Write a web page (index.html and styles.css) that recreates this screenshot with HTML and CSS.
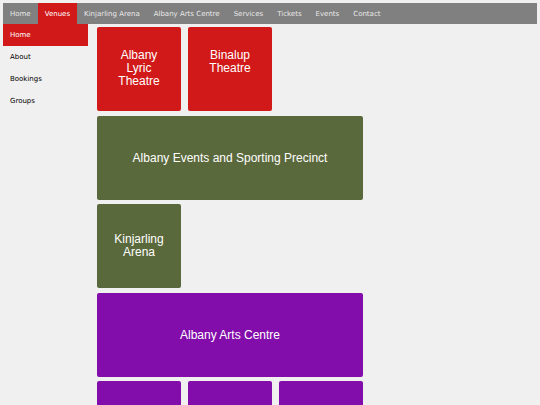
FILE: index.html
```html
<!DOCTYPE html>
<html lang="en">
<head>
<meta charset="utf-8">
<meta name="viewport" content="width=device-width, initial-scale=1">
<title>Venues</title>
<link rel="stylesheet" href="styles.css">
</head>
<body>
<nav class="topnav" aria-label="Main">
  <a href="#">Home</a>
  <a href="#" class="active">Venues</a>
  <a href="#">Kinjarling Arena</a>
  <a href="#">Albany Arts Centre</a>
  <a href="#">Services</a>
  <a href="#">Tickets</a>
  <a href="#">Events</a>
  <a href="#">Contact</a>
</nav>
<div class="layout">
  <nav class="sidenav" aria-label="Venues">
    <a href="#" class="active">Home</a>
    <a href="#">About</a>
    <a href="#">Bookings</a>
    <a href="#">Groups</a>
  </nav>
  <main class="venues">
    <section class="group red">
      <a href="#" class="tile top">Albany Lyric Theatre</a>
      <a href="#" class="tile top">Binalup Theatre</a>
    </section>
    <section class="group green">
      <a href="#" class="tile wide">Albany Events and Sporting Precinct</a>
      <a href="#" class="tile">Kinjarling Arena</a>
    </section>
    <section class="group purple">
      <a href="#" class="tile wide">Albany Arts Centre</a>
      <a href="#" class="tile"></a>
      <a href="#" class="tile"></a>
      <a href="#" class="tile"></a>
    </section>
  </main>
</div>
</body>
</html>
```
FILE: styles.css
```css
* {
  box-sizing: border-box;
}

html {
  height: 100%;
  overflow: hidden;
}

body {
  margin: 0;
  padding: 3px;
  background: #f0f0f0;
  font: 7px/20px "DejaVu Sans", sans-serif;
}

a {
  text-decoration: none;
}

.topnav {
  display: flex;
  background: #808080;
}

.topnav a {
  padding: 1px 7px 0;
  color: #e8e8e8;
}

.topnav .active,
.sidenav .active {
  background: #d11919;
  color: #fff;
}

.layout {
  display: flex;
  align-items: flex-start;
  gap: 9px;
}

.sidenav {
  display: grid;
  flex: 0 0 85px;
}

.sidenav a {
  padding: 0 7px;
  color: #000;
  line-height: 22px;
}

.venues {
  display: grid;
  gap: 5px;
  padding-top: 3px;
}

.group {
  display: grid;
  grid-template-columns: repeat(3, 84px);
  grid-auto-rows: 84px;
  gap: 4px 7px;
}

.tile {
  display: flex;
  align-items: center;
  justify-content: center;
  padding: 0 17px;
  border-radius: 2px;
  color: #fff;
  font: 12px/13px "Liberation Sans", Arial, sans-serif;
  text-align: center;
}

.wide {
  grid-column: 1 / -1;
}

.top {
  align-items: flex-start;
  padding-top: 22px;
}

.red .tile {
  background: #d11919;
}

.green .tile {
  background: #5a693c;
}

.purple .tile {
  background: #820dab;
}
```
